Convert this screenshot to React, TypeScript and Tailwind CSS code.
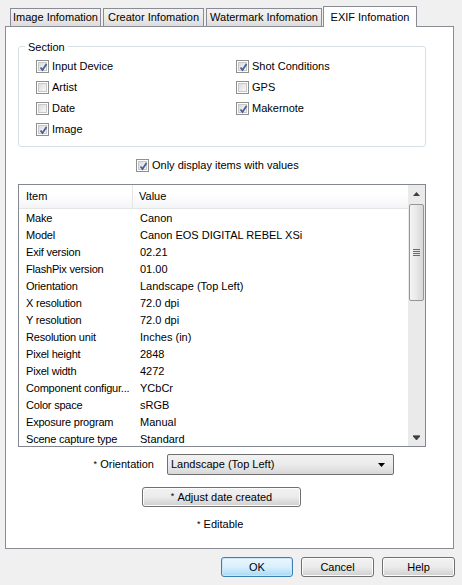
import type { ReactNode } from "react";

const rows: [string, string][] = [
  ["Make", "Canon"],
  ["Model", "Canon EOS DIGITAL REBEL XSi"],
  ["Exif version", "02.21"],
  ["FlashPix version", "01.00"],
  ["Orientation", "Landscape (Top Left)"],
  ["X resolution", "72.0 dpi"],
  ["Y resolution", "72.0 dpi"],
  ["Resolution unit", "Inches (in)"],
  ["Pixel height", "2848"],
  ["Pixel width", "4272"],
  ["Component configur...", "YCbCr"],
  ["Color space", "sRGB"],
  ["Exposure program", "Manual"],
  ["Scene capture type", "Standard"],
];

function Check({ checked }: { checked?: boolean }) {
  return (
    <div className="relative h-[13px] w-[13px] shrink-0 border border-[#8e8f8f] bg-white p-[1px]">
      <div className="h-full w-full border border-[#c8c8c8] bg-gradient-to-br from-[#dcdcdc] to-[#f8f8f8]" />
      {checked && (
        <svg className="absolute left-[1px] top-[1px]" width="11" height="11" viewBox="0 0 11 11">
          <path d="M2.5 5.5 L4.5 8 L8.5 2" fill="none" stroke="#4a5f97" strokeWidth="1.8" />
        </svg>
      )}
    </div>
  );
}

function CheckItem({ label, checked }: { label: string; checked?: boolean }) {
  return (
    <div className="flex h-[21px] items-center gap-[3px]">
      <Check checked={checked} />
      <span>{label}</span>
    </div>
  );
}

function Tab({ label, w, active }: { label: string; w: string; active?: boolean }) {
  if (active) {
    return (
      <div
        className={`relative z-10 -mb-px flex h-[21px] items-center justify-center border border-b-0 border-[#898c95] bg-white ${w}`}
      >
        {label}
      </div>
    );
  }
  return (
    <div
      className={`flex h-[18px] items-center justify-center border border-b-0 border-[#898c95] bg-gradient-to-b from-[#f3f3f3] via-[#ebebeb] to-[#dcdcdc] ${w}`}
    >
      {label}
    </div>
  );
}

function Btn({ children, w, def }: { children: ReactNode; w: string; def?: boolean }) {
  return (
    <div
      className={`flex h-[20px] items-center justify-center rounded-[3px] border ${w} ${
        def
          ? "border-[#3c7fb1] bg-gradient-to-b from-[#eaf6fd] via-[#d9f0fc] to-[#a7d9f5] shadow-[inset_0_0_0_1px_#c9e7f8]"
          : "border-[#707070] bg-gradient-to-b from-[#f2f2f2] via-[#ebebeb] to-[#cfcfcf] shadow-[inset_0_0_0_1px_#fcfcfc]"
      }`}
    >
      {children}
    </div>
  );
}

function ScrollBar() {
  return (
    <div className="flex w-[17px] shrink-0 flex-col bg-[#eaeaea]">
      <div className="flex h-[17px] items-center justify-center">
        <svg width="7" height="4" viewBox="0 0 7 4">
          <path d="M0 4 L3.5 0 L7 4 Z" fill="#3e3e3e" />
        </svg>
      </div>
      <div className="mx-px mt-[2px] flex h-[97px] items-center justify-center rounded-[2px] border border-[#969696] bg-gradient-to-r from-[#f4f4f4] via-[#e8e8e8] to-[#d8d8d8]">
        <div className="flex flex-col gap-[1px]">
          <div className="h-px w-[7px] bg-[#6b6b6b]" />
          <div className="h-px w-[7px] bg-[#6b6b6b]" />
          <div className="h-px w-[7px] bg-[#6b6b6b]" />
          <div className="h-px w-[7px] bg-[#6b6b6b]" />
        </div>
      </div>
      <div className="flex-1" />
      <div className="flex h-[17px] items-center justify-center">
        <svg width="7" height="5" viewBox="0 0 7 5">
          <path d="M0 0 H7 M0 1 L3.5 5 L7 1 Z" fill="#3e3e3e" stroke="#3e3e3e" strokeWidth="0.8" />
        </svg>
      </div>
    </div>
  );
}

export default function App() {
  return (
    <div
      className="h-[585px] w-[462px] overflow-hidden bg-[#f0f0f0] text-[11px] text-black"
      style={{ fontFamily: '"Liberation Sans", Arial, sans-serif' }}
    >
      {/* tab strip */}
      <div className="flex h-[26px] items-end pl-[10px]">
        <Tab label="Image Infomation" w="w-[91px]" />
        <div className="ml-[2px]" />
        <Tab label="Creator Infomation" w="w-[101px]" />
        <div className="ml-[2px]" />
        <Tab label="Watermark Infomation" w="w-[116px]" />
        <div className="ml-[1px]" />
        <Tab label="EXIF Infomation" w="w-[94px]" active />
      </div>

      {/* tab panel */}
      <div className="ml-[5px] flex h-[523px] w-[449px] flex-col border border-[#898c95] bg-white">
        <div className="relative ml-[12px] mt-[19px] h-[101px] w-[408px] rounded-[3px] border border-[#d5dfe5] pt-[9px]">
          <span className="absolute -top-[8px] left-[6px] bg-white px-[3px]">Section</span>
          <div className="grid grid-cols-[200px_200px] pl-[17px]">
            <div>
              <CheckItem label="Input Device" checked />
              <CheckItem label="Artist" />
              <CheckItem label="Date" />
              <CheckItem label="Image" checked />
            </div>
            <div>
              <CheckItem label="Shot Conditions" checked />
              <CheckItem label="GPS" />
              <CheckItem label="Makernote" checked />
            </div>
          </div>
        </div>

        <div className="ml-[130px] mt-[8px] flex h-[20px] items-center gap-[3px]">
          <Check checked />
          <span>Only display items with values</span>
        </div>

        {/* list */}
        <div className="ml-[12px] mt-[9px] flex h-[263px] w-[408px] border border-[#828790]">
          <div className="flex min-w-0 flex-1 flex-col overflow-hidden">
            <div className="flex h-[24px] shrink-0 border-b border-[#e5e5e5] bg-gradient-to-b from-white from-40% to-[#f3f4f6]">
              <div className="flex w-[114px] items-center border-r border-[#e3e5e8] pl-[7px]">Item</div>
              <div className="flex items-center pl-[6px]">Value</div>
            </div>
            <div className="pt-px">
              {rows.map(([k, v]) => (
                <div key={k} className="flex h-[17px] items-center whitespace-nowrap">
                  <div className="w-[114px] shrink-0 overflow-hidden pl-[7px] tracking-[-0.2px]">{k}</div>
                  <div className="pl-[7px]">{v}</div>
                </div>
              ))}
            </div>
          </div>
          <ScrollBar />
        </div>

        {/* orientation */}
        <div className="mt-[7px] flex h-[21px] items-center">
          <span className="w-[148px] text-right">
            <sup className="relative -top-[1px] text-[9px]">*</sup> Orientation
          </span>
          <div className="ml-[13px] flex h-[21px] w-[227px] items-center justify-between rounded-[2px] border border-[#707070] bg-gradient-to-b from-[#f2f2f2] via-[#ebebeb] to-[#d8d8d8] pl-[3px] pr-[8px]">
            <span>Landscape (Top Left)</span>
            <svg width="7" height="4" viewBox="0 0 7 4">
              <path d="M0 0 L7 0 L3.5 4 Z" fill="#000" />
            </svg>
          </div>
        </div>

        <div className="ml-[136px] mt-[12px]">
          <Btn w="w-[159px]">
            <sup className="relative -top-[1px] text-[9px]">*</sup>&nbsp;Adjust date created
          </Btn>
        </div>

        <div className="ml-[191px] mt-[9px]">
          <sup className="relative -top-[1px] text-[9px]">*</sup> Editable
        </div>
      </div>

      {/* dialog buttons */}
      <div className="mt-[8px] flex pl-[221px]">
        <Btn w="w-[72px]" def>
          OK
        </Btn>
        <div className="ml-[8px]" />
        <Btn w="w-[73px]">Cancel</Btn>
        <div className="ml-[8px]" />
        <Btn w="w-[73px]">Help</Btn>
      </div>
    </div>
  );
}
